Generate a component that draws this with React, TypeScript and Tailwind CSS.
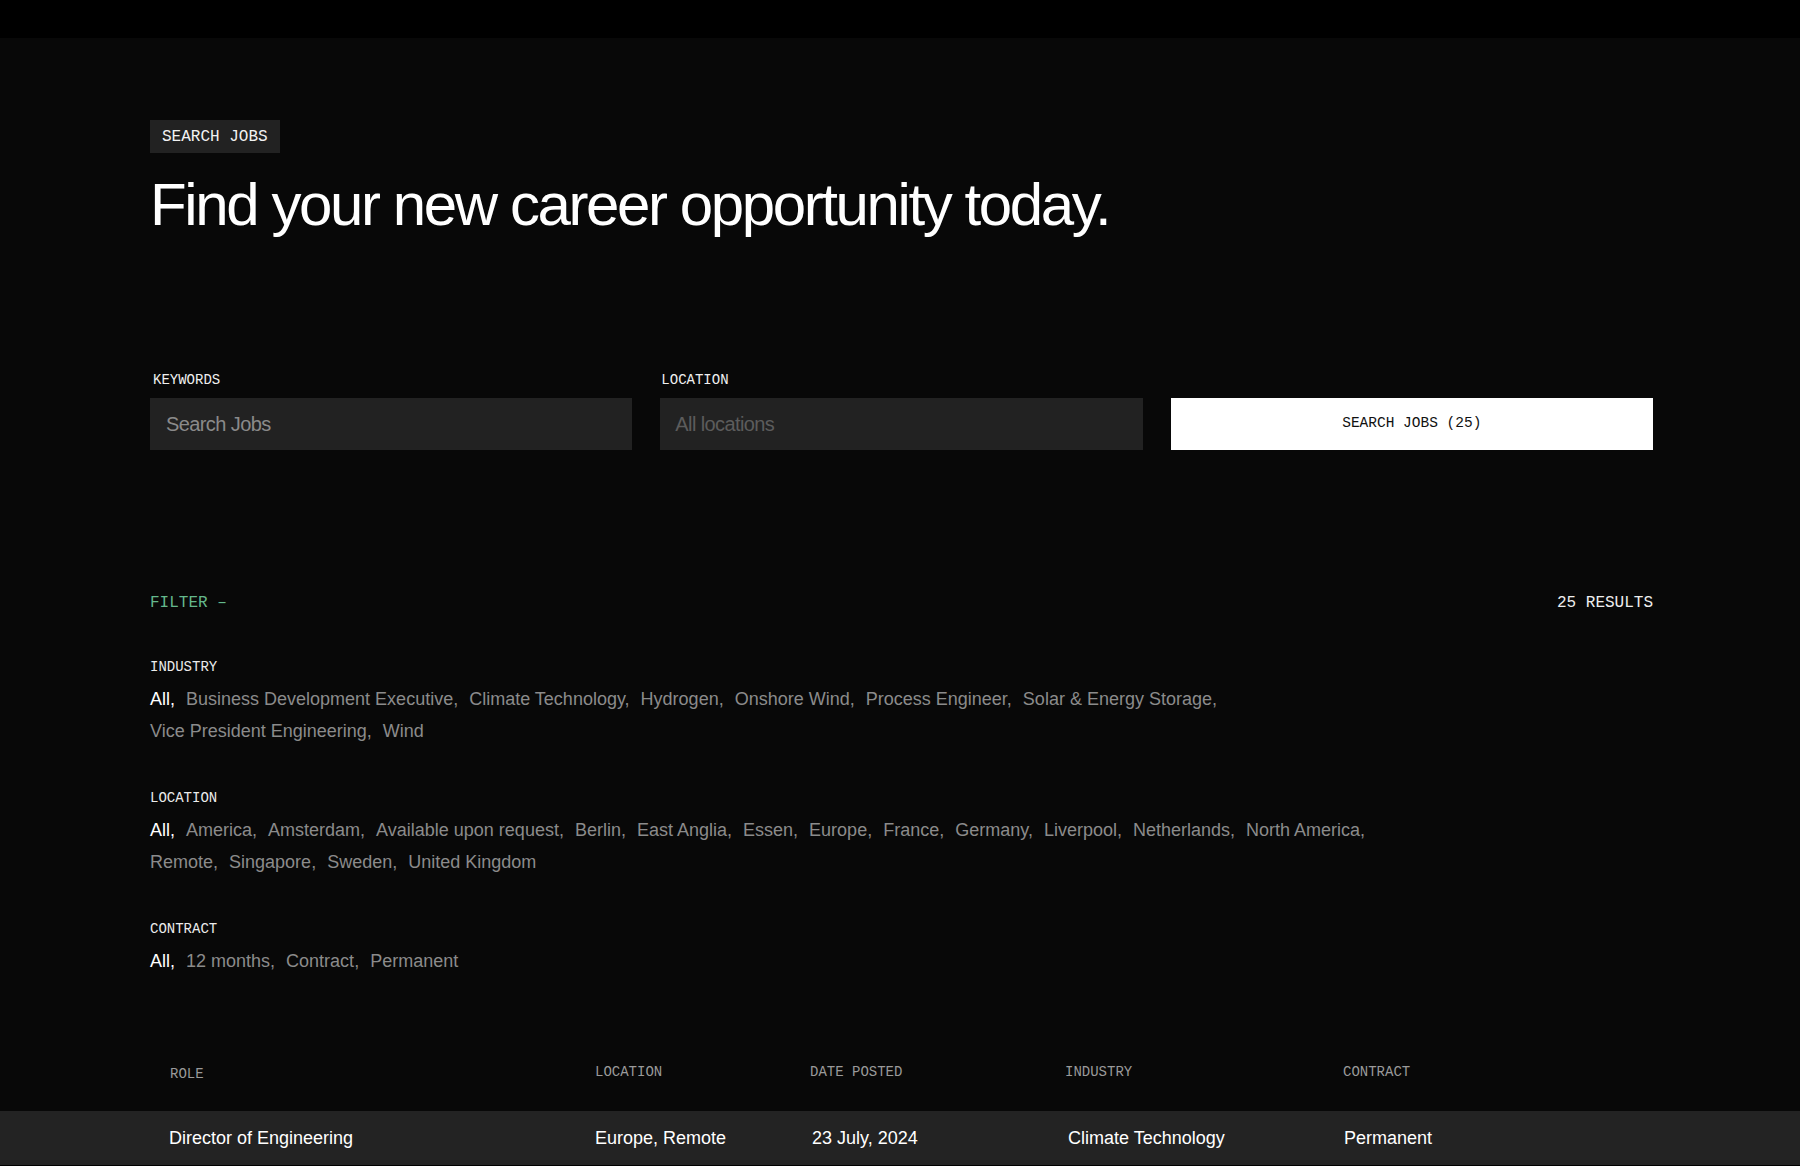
import React from "react";

const industries = [
  "Business Development Executive",
  "Climate Technology",
  "Hydrogen",
  "Onshore Wind",
  "Process Engineer",
  "Solar & Energy Storage",
  "Vice President Engineering",
  "Wind",
];

const locations = [
  "America",
  "Amsterdam",
  "Available upon request",
  "Berlin",
  "East Anglia",
  "Essen",
  "Europe",
  "France",
  "Germany",
  "Liverpool",
  "Netherlands",
  "North America",
  "Remote",
  "Singapore",
  "Sweden",
  "United Kingdom",
];

const contracts = ["12 months", "Contract", "Permanent"];

const jobs = [
  {
    role: "Director of Engineering",
    location: "Europe, Remote",
    posted: "23 July, 2024",
    industry: "Climate Technology",
    contract: "Permanent",
  },
];

const mono = "font-['Liberation_Mono','DejaVu_Sans_Mono',monospace]";
const sans = "font-['Liberation_Sans',Arial,sans-serif]";

function FilterGroup({ label, options, first }: { label: string; options: string[]; first?: boolean }) {
  return (
    <div className={first ? "mt-[46px]" : "mt-[43px]"}>
      <div className={`${mono} text-[14px] leading-4 text-[#ececec]`}>{label}</div>
      <ul className={`${sans} mt-2 flex max-w-[1250px] flex-wrap gap-x-[11px] text-[18px] leading-8 text-[#8b8b8b]`}>
        <li className="text-white">All,</li>
        {options.map((o, i) => (
          <li key={o} className="cursor-pointer hover:text-white">
            {o}
            {i < options.length - 1 ? "," : ""}
          </li>
        ))}
      </ul>
    </div>
  );
}

export default function App() {
  return (
    <div className="min-h-screen bg-[#080808] text-white">
      <div className="h-[38px] bg-black" />

      <main className="mx-auto max-w-[1800px] pl-[150px] pr-[147px] pt-[82px]">
        <span className={`${mono} inline-flex h-[33px] items-center bg-[#222222] px-3 text-[16px] text-[#f2f2f2]`}>
          SEARCH JOBS
        </span>
        <h1 className={`${sans} mt-[22px] text-[60px] leading-none tracking-[-0.04em] text-white`}>
          Find your new career opportunity today.
        </h1>

        <form className="mt-[137px] grid grid-cols-3 items-end gap-x-[28px]" onSubmit={(e) => e.preventDefault()}>
          <label className="block">
            <span className={`${mono} ml-[3px] block text-[14px] leading-4 text-[#f0f0f0]`}>KEYWORDS</span>
            <input
              placeholder="Search Jobs"
              className={`${sans} mt-[10px] h-[52px] w-full bg-[#222222] px-4 text-[20px] tracking-[-0.03em] text-white outline-none placeholder:text-[#8a8a8a]`}
            />
          </label>
          <label className="block">
            <span className={`${mono} ml-[1px] block text-[14px] leading-4 text-[#f0f0f0]`}>LOCATION</span>
            <input
              placeholder="All locations"
              className={`${sans} mt-[10px] h-[52px] w-full bg-[#222222] px-[15px] text-[20px] tracking-[-0.03em] text-white outline-none placeholder:text-[#5c5c5c]`}
            />
          </label>
          <button
            type="submit"
            className={`${mono} h-[52px] w-full bg-white text-[14.5px] text-[#111111]`}
          >
            SEARCH JOBS (25)
          </button>
        </form>

        <div className={`${mono} mt-[143px] flex items-center justify-between text-[16px] leading-5`}>
          <button className="text-[#64b88c]">FILTER –</button>
          <span className="text-[#eeeeee]">25 RESULTS</span>
        </div>

        <FilterGroup label="INDUSTRY" options={industries} first />
        <FilterGroup label="LOCATION" options={locations} />
        <FilterGroup label="CONTRACT" options={contracts} />

        <div
          className={`${mono} mt-[87px] grid grid-cols-[425px_215px_255px_278px_1fr] pl-5 text-[14px] leading-4 text-[#9a9a9a]`}
        >
          <span className="translate-y-[2px]">ROLE</span>
          <span>LOCATION</span>
          <span>DATE POSTED</span>
          <span>INDUSTRY</span>
          <span>CONTRACT</span>
        </div>
      </main>

      <div className="mt-[31px]">
        {jobs.map((job) => (
          <div key={job.role} className="border-b border-black bg-[#232323]">
            <div
              className={`${sans} mx-auto grid h-[54px] max-w-[1800px] grid-cols-[426px_217px_256px_276px_1fr] items-center pl-[169px] text-[18px] text-white`}
            >
              <span>{job.role}</span>
              <span>{job.location}</span>
              <span>{job.posted}</span>
              <span>{job.industry}</span>
              <span>{job.contract}</span>
            </div>
          </div>
        ))}
      </div>
    </div>
  );
}
